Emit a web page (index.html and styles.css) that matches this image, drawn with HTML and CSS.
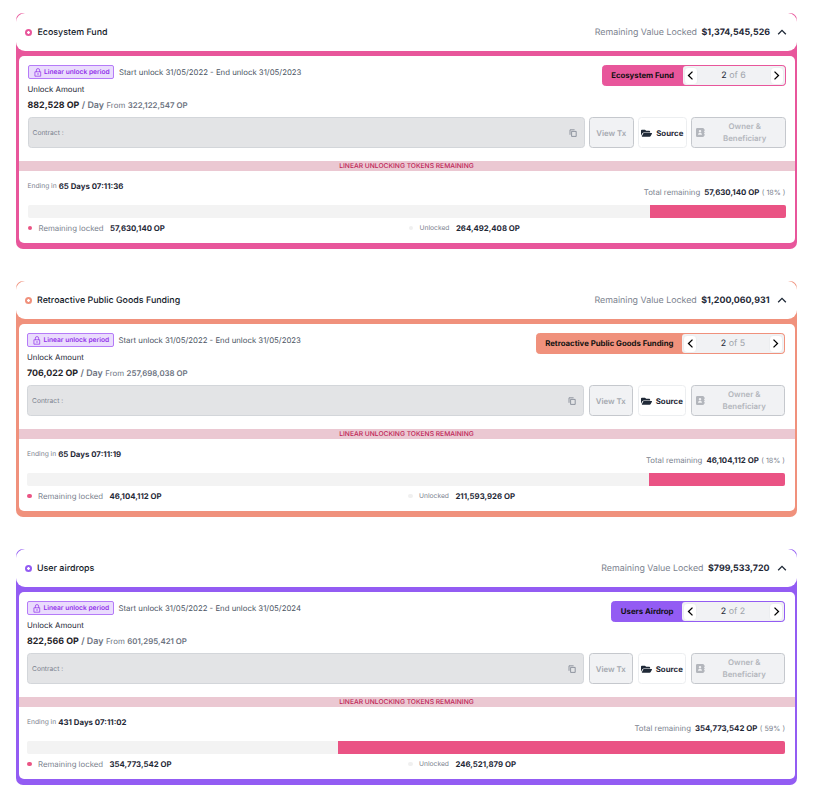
FILE: index.html
```html
<!DOCTYPE html>
<html lang="en">
<head>
    <meta charset="UTF-8">
    <meta name="viewport" content="width=device-width, initial-scale=1.0">
    <title>Token Unlocks</title>
    <link rel="stylesheet" href="styles.css">
</head>
<body>
    <!-- Shared icons -->
    <svg class="icon-defs" width="0" height="0">
        <symbol id="icon-lock" viewBox="0 0 8 10">
            <path d="M2.2 4V2.4a1.8 1.8 0 0 1 3.6 0V4M1 4.2h6v4.9H1zM4 6v1.3" fill="none" stroke="currentColor" stroke-width="0.8" stroke-linecap="round" stroke-linejoin="round"/>
        </symbol>
        <symbol id="icon-up" viewBox="0 0 10 10">
            <path d="M1.8 6.8L5 3.6l3.2 3.2" fill="none" stroke="currentColor" stroke-width="1.1"/>
        </symbol>
        <symbol id="icon-left" viewBox="0 0 10 10">
            <path d="M6.8 1.5L3.2 5l3.6 3.5" fill="none" stroke="currentColor" stroke-width="1.2"/>
        </symbol>
        <symbol id="icon-right" viewBox="0 0 10 10">
            <path d="M3.2 1.5L6.8 5 3.2 8.5" fill="none" stroke="currentColor" stroke-width="1.2"/>
        </symbol>
        <symbol id="icon-copy" viewBox="0 0 8 8">
            <path d="M2.6 2.4h4.6v5H2.6zM1 5.8V.8h4.6" fill="none" stroke="currentColor" stroke-width="0.8" stroke-linejoin="round"/>
        </symbol>
        <symbol id="icon-folder" viewBox="0 0 576 512">
            <path d="M573 295L500 429c-9 15-29 27-46 27H64c-19 0-30-20-21-36l73-134c9-15 29-24 46-24h390c19 0 30 17 21 33zM152 225h328v-33c0-27-21-48-48-48H272l-64-64H48C21 80 0 101 0 128v278l70-134c17-29 48-47 82-47z" fill="currentColor"/>
        </symbol>
        <symbol id="icon-contact" viewBox="0 0 9 9">
            <path d="M1.2 0h5.6Q8 0 8 1.2v6.6Q8 9 6.8 9H1.2Q0 9 0 7.8V1.2Q0 0 1.2 0zM4 2a1.25 1.25 0 1 0 0 2.5A1.25 1.25 0 0 0 4 2zM2 6.8h4Q6 5 4.8 5H3.2Q2 5 2 6.8zM8.4 1.3H9v1.6h-.6zM8.4 3.7H9v1.6h-.6zM8.4 6.1H9v1.6h-.6z" fill="currentColor" fill-rule="evenodd"/>
        </symbol>
    </svg>

    <div class="unlock-list">
        <section class="card card-pink">
            <header class="card-header">
                <span class="ring"></span>
                <h2 class="card-title">Ecosystem Fund</h2>
                <span class="locked-label">Remaining Value Locked</span>
                <span class="locked-value">$1,374,545,526</span>
                <svg class="icon-toggle"><use href="#icon-up"/></svg>
            </header>
            <div class="card-body">
                <div class="top">
                    <div class="info">
                        <div class="period">
                            <span class="badge"><svg class="icon-lock"><use href="#icon-lock"/></svg><span class="badge-text">Linear unlock period</span></span>
                            <span class="dates">Start unlock 31/05/2022 - End unlock 31/05/2023</span>
                        </div>
                        <div class="amount-label"><span>Unlock Amount</span></div>
                        <div class="amount">
                            <strong class="amount-value">882,528 OP</strong>
                            <span class="per-day">/ Day</span>
                            <span class="from">From</span>
                            <span class="from-value">322,122,547 OP</span>
                        </div>
                    </div>
                    <div class="pager">
                        <span class="pager-name">Ecosystem Fund</span>
                        <div class="pager-nav">
                            <button class="pager-btn"><svg><use href="#icon-left"/></svg></button>
                            <span class="pager-count"><b>2</b> of 6</span>
                            <button class="pager-btn"><svg><use href="#icon-right"/></svg></button>
                        </div>
                    </div>
                </div>
                <div class="actions">
                    <div class="contract"><span>Contract :</span><svg class="icon-copy"><use href="#icon-copy"/></svg></div>
                    <button class="btn btn-tx">View Tx</button>
                    <button class="btn btn-source"><svg class="icon-folder"><use href="#icon-folder"/></svg>Source</button>
                    <button class="btn btn-owner"><svg class="icon-contact"><use href="#icon-contact"/></svg><span class="owner-text">Owner &amp;<br>Beneficiary</span></button>
                </div>
                <div class="band"><span>LINEAR UNLOCKING TOKENS REMAINING</span></div>
                <div class="summary">
                    <div class="ending"><span class="ending-label">Ending in</span><strong>65 Days 07:11:36</strong></div>
                    <div class="total"><span class="total-label">Total remaining</span><strong>57,630,140 OP</strong><span class="percent">( 18% )</span></div>
                </div>
                <div class="progress"><div class="progress-fill" style="width: 17.9%"></div></div>
                <div class="legend">
                    <div class="legend-item"><i class="dot"></i><span class="legend-label">Remaining locked</span><strong>57,630,140 OP</strong></div>
                    <div class="legend-item"><i class="dot dot-light"></i><span class="legend-small">Unlocked</span><strong>264,492,408 OP</strong></div>
                </div>
            </div>
        </section>

        <section class="card card-orange">
            <header class="card-header">
                <span class="ring"></span>
                <h2 class="card-title">Retroactive Public Goods Funding</h2>
                <span class="locked-label">Remaining Value Locked</span>
                <span class="locked-value">$1,200,060,931</span>
                <svg class="icon-toggle"><use href="#icon-up"/></svg>
            </header>
            <div class="card-body">
                <div class="top">
                    <div class="info">
                        <div class="period">
                            <span class="badge"><svg class="icon-lock"><use href="#icon-lock"/></svg><span class="badge-text">Linear unlock period</span></span>
                            <span class="dates">Start unlock 31/05/2022 - End unlock 31/05/2023</span>
                        </div>
                        <div class="amount-label"><span>Unlock Amount</span></div>
                        <div class="amount">
                            <strong class="amount-value">706,022 OP</strong>
                            <span class="per-day">/ Day</span>
                            <span class="from">From</span>
                            <span class="from-value">257,698,038 OP</span>
                        </div>
                    </div>
                    <div class="pager">
                        <span class="pager-name">Retroactive Public Goods Funding</span>
                        <div class="pager-nav">
                            <button class="pager-btn"><svg><use href="#icon-left"/></svg></button>
                            <span class="pager-count"><b>2</b> of 5</span>
                            <button class="pager-btn"><svg><use href="#icon-right"/></svg></button>
                        </div>
                    </div>
                </div>
                <div class="actions">
                    <div class="contract"><span>Contract :</span><svg class="icon-copy"><use href="#icon-copy"/></svg></div>
                    <button class="btn btn-tx">View Tx</button>
                    <button class="btn btn-source"><svg class="icon-folder"><use href="#icon-folder"/></svg>Source</button>
                    <button class="btn btn-owner"><svg class="icon-contact"><use href="#icon-contact"/></svg><span class="owner-text">Owner &amp;<br>Beneficiary</span></button>
                </div>
                <div class="band"><span>LINEAR UNLOCKING TOKENS REMAINING</span></div>
                <div class="summary">
                    <div class="ending"><span class="ending-label">Ending in</span><strong>65 Days 07:11:19</strong></div>
                    <div class="total"><span class="total-label">Total remaining</span><strong>46,104,112 OP</strong><span class="percent">( 18% )</span></div>
                </div>
                <div class="progress"><div class="progress-fill" style="width: 17.9%"></div></div>
                <div class="legend">
                    <div class="legend-item"><i class="dot"></i><span class="legend-label">Remaining locked</span><strong>46,104,112 OP</strong></div>
                    <div class="legend-item"><i class="dot dot-light"></i><span class="legend-small">Unlocked</span><strong>211,593,926 OP</strong></div>
                </div>
            </div>
        </section>

        <section class="card card-purple">
            <header class="card-header">
                <span class="ring"></span>
                <h2 class="card-title">User airdrops</h2>
                <span class="locked-label">Remaining Value Locked</span>
                <span class="locked-value">$799,533,720</span>
                <svg class="icon-toggle"><use href="#icon-up"/></svg>
            </header>
            <div class="card-body">
                <div class="top">
                    <div class="info">
                        <div class="period">
                            <span class="badge"><svg class="icon-lock"><use href="#icon-lock"/></svg><span class="badge-text">Linear unlock period</span></span>
                            <span class="dates">Start unlock 31/05/2022 - End unlock 31/05/2024</span>
                        </div>
                        <div class="amount-label"><span>Unlock Amount</span></div>
                        <div class="amount">
                            <strong class="amount-value">822,566 OP</strong>
                            <span class="per-day">/ Day</span>
                            <span class="from">From</span>
                            <span class="from-value">601,295,421 OP</span>
                        </div>
                    </div>
                    <div class="pager">
                        <span class="pager-name">Users Airdrop</span>
                        <div class="pager-nav">
                            <button class="pager-btn"><svg><use href="#icon-left"/></svg></button>
                            <span class="pager-count"><b>2</b> of 2</span>
                            <button class="pager-btn"><svg><use href="#icon-right"/></svg></button>
                        </div>
                    </div>
                </div>
                <div class="actions">
                    <div class="contract"><span>Contract :</span><svg class="icon-copy"><use href="#icon-copy"/></svg></div>
                    <button class="btn btn-tx">View Tx</button>
                    <button class="btn btn-source"><svg class="icon-folder"><use href="#icon-folder"/></svg>Source</button>
                    <button class="btn btn-owner"><svg class="icon-contact"><use href="#icon-contact"/></svg><span class="owner-text">Owner &amp;<br>Beneficiary</span></button>
                </div>
                <div class="band"><span>LINEAR UNLOCKING TOKENS REMAINING</span></div>
                <div class="summary">
                    <div class="ending"><span class="ending-label">Ending in</span><strong>431 Days 07:11:02</strong></div>
                    <div class="total"><span class="total-label">Total remaining</span><strong>354,773,542 OP</strong><span class="percent">( 59% )</span></div>
                </div>
                <div class="progress"><div class="progress-fill" style="width: 59%"></div></div>
                <div class="legend">
                    <div class="legend-item"><i class="dot"></i><span class="legend-label">Remaining locked</span><strong>354,773,542 OP</strong></div>
                    <div class="legend-item"><i class="dot dot-light"></i><span class="legend-small">Unlocked</span><strong>246,521,879 OP</strong></div>
                </div>
            </div>
        </section>
    </div>
</body>
</html>
```
FILE: styles.css
```css
* {
    margin: 0;
    padding: 0;
    box-sizing: border-box;
    font-family: Inter, 'Liberation Sans', sans-serif;
    text-rendering: geometricPrecision;
}

body {
    background-color: #fff;
    color: #1f2937;
    overflow: hidden;
}

.icon-defs {
    display: none;
}

.unlock-list {
    display: flex;
    flex-direction: column;
    gap: 32px;
    width: 797px;
    padding: 13px 0 0 16px;
    white-space: nowrap;
}

.card {
    --accent: #e8569b;
    --gutter: 9px;
    --gutter-right: 9px;
    height: 236px;
    background-color: var(--accent);
    border-radius: 7px;
}

.card-orange {
    --accent: #f0917c;
    --gutter: 8.5px;
    --gutter-right: 9.5px;
}

.card-purple {
    --accent: #935cf3;
    --gutter: 8.5px;
    --gutter-right: 9.5px;
}

/* Header */
.card-header {
    display: flex;
    align-items: center;
    height: 38px;
    padding: 0 var(--gutter-right) 0 var(--gutter);
    background-color: #fff;
    border-radius: 9px;
}

.ring {
    width: 7px;
    height: 7px;
    border-radius: 50%;
    background: radial-gradient(circle, #fff 1px, var(--accent) 1.6px);
}

.card-title {
    flex: 1;
    margin-left: 5.5px;
    font-size: 8.9px;
    font-weight: 500;
    color: #111827;
}

.locked-label {
    font-size: 8.85px;
    color: #7b828e;
}

.locked-value {
    margin-left: 4.5px;
    font-size: 8.9px;
    font-weight: 700;
}

.icon-toggle {
    width: 12px;
    height: 12px;
    margin-left: 6px;
}

/* Body */
.card-body {
    height: 187px;
    margin: 5px 2.5px 0;
    padding-top: 9px;
    background-color: #fff;
    border-radius: 5px;
}

.top,
.actions,
.summary,
.progress,
.legend {
    margin: 0 var(--gutter-right) 0 var(--gutter);
}

.top {
    display: flex;
    justify-content: space-between;
    height: 52px;
}

.period {
    display: flex;
    align-items: center;
    height: 14px;
    gap: 5px;
}

.badge {
    display: flex;
    align-items: center;
    width: 86.5px;
    height: 14px;
    padding-left: 5px;
    border: 1px solid #b57bf8;
    border-radius: 2px;
    background-color: #eadcfd;
    color: #9333ea;
    font-size: 6.65px;
    font-weight: 600;
}

.icon-lock {
    width: 8px;
    height: 9px;
    margin-right: 2.5px;
    margin-top: 1px;
}

.dates {
    font-size: 7.8px;
    color: #4b5563;
}

.amount-label {
    display: flex;
    align-items: center;
    height: 20px;
    font-size: 7.85px;
}

.amount {
    display: flex;
    align-items: baseline;
    height: 13px;
    padding-top: 1px;
    gap: 2.5px;
    color: #6b7280;
}

.amount-value {
    font-size: 8.9px;
    color: #1f2328;
}

.per-day {
    font-size: 8.9px;
    font-weight: 600;
}

.from,
.from-value {
    font-size: 7.85px;
}

.from-value {
    font-weight: 600;
}

.pager {
    display: flex;
    height: 21px;
    border: 1px solid var(--accent);
    border-radius: 3.5px;
    background-color: var(--accent);
}

.pager-name {
    padding: 0 8.5px;
    font-size: 7.8px;
    font-weight: 700;
    line-height: 19px;
    color: #111;
}

.pager-nav {
    display: flex;
    justify-content: space-between;
    align-items: center;
    width: 102px;
    padding: 0 1px;
    border-radius: 3px;
    background-color: #f1f2f4;
}

.pager-btn {
    display: flex;
    align-items: center;
    justify-content: center;
    width: 14px;
    height: 18px;
    border: 1px solid #eceef0;
    border-radius: 4px;
    background-color: #fff;
    color: #000;
}

.pager-btn svg {
    flex: none;
    width: 11px;
    height: 11px;
}

.pager-count {
    font-size: 8.9px;
    color: #a0a4ab;
}

.pager-count b {
    font-weight: 400;
    color: #1f2937;
}

.actions {
    display: flex;
    gap: 4.5px;
    height: 31px;
}

.contract {
    display: flex;
    flex: 1;
    align-items: center;
    justify-content: space-between;
    padding: 0 7px 0 4px;
    border: 1px solid #d3d6da;
    border-radius: 3.5px;
    background-color: #e3e4e6;
    font-size: 6.7px;
    color: #7b828e;
}

.icon-copy {
    width: 8px;
    height: 8px;
}

.btn {
    display: flex;
    align-items: center;
    justify-content: center;
    border: 1px solid #c5c8cd;
    border-radius: 3.5px;
    background-color: #f1f2f4;
    font-size: 7.85px;
    font-weight: 600;
    color: #a5a9b0;
}

.btn-tx {
    width: 44.5px;
}

.btn-source {
    width: 48.5px;
    gap: 4px;
    border-color: #eceef0;
    background-color: #fff;
    font-weight: 700;
    color: #1f2937;
}

.icon-folder {
    width: 11px;
    height: 10px;
}

.btn-owner {
    width: 94.5px;
    padding: 0 4px;
    line-height: 11.6px;
    color: #b3b6bc;
}

.icon-contact {
    width: 9px;
    height: 9px;
}

.owner-text {
    flex: 1;
    padding-left: 4px;
}

.band {
    display: flex;
    align-items: center;
    justify-content: center;
    height: 10px;
    margin-top: 13px;
    background-color: #ebc8d2;
    font-size: 6.7px;
    font-weight: 500;
    color: #be2457;
}

.summary {
    display: flex;
    justify-content: space-between;
    height: 34px;
    padding-top: 9.5px;
    font-size: 6.7px;
    color: #7b828e;
}

.summary strong {
    font-size: 7.85px;
    color: #1f2937;
}

.ending,
.total {
    display: flex;
    align-items: center;
    height: 11px;
}

.ending {
    gap: 2px;
}

.total {
    margin-top: 6px;
    font-size: 7.8px;
}

.total-label {
    margin-right: 4px;
}

.percent {
    margin-left: 2.5px;
    font-size: 7.2px;
}

.progress {
    display: flex;
    justify-content: flex-end;
    height: 13px;
    border-radius: 2px;
    background-color: #f3f3f3;
    overflow: hidden;
}

.progress-fill {
    background-color: #ea5384;
}

.legend {
    display: grid;
    grid-template-columns: 381px 1fr;
    height: 20px;
}

.legend-item {
    display: flex;
    align-items: center;
    font-size: 7.8px;
    color: #7b828e;
}

.legend-item strong {
    margin-left: 6.5px;
    color: #1f2937;
}

.dot {
    width: 4.5px;
    height: 4.5px;
    margin-right: 6.5px;
    border-radius: 50%;
    background-color: #ea5384;
}

.dot-light {
    background-color: #f0f0f0;
}

.legend-small {
    font-size: 6.7px;
}
```
